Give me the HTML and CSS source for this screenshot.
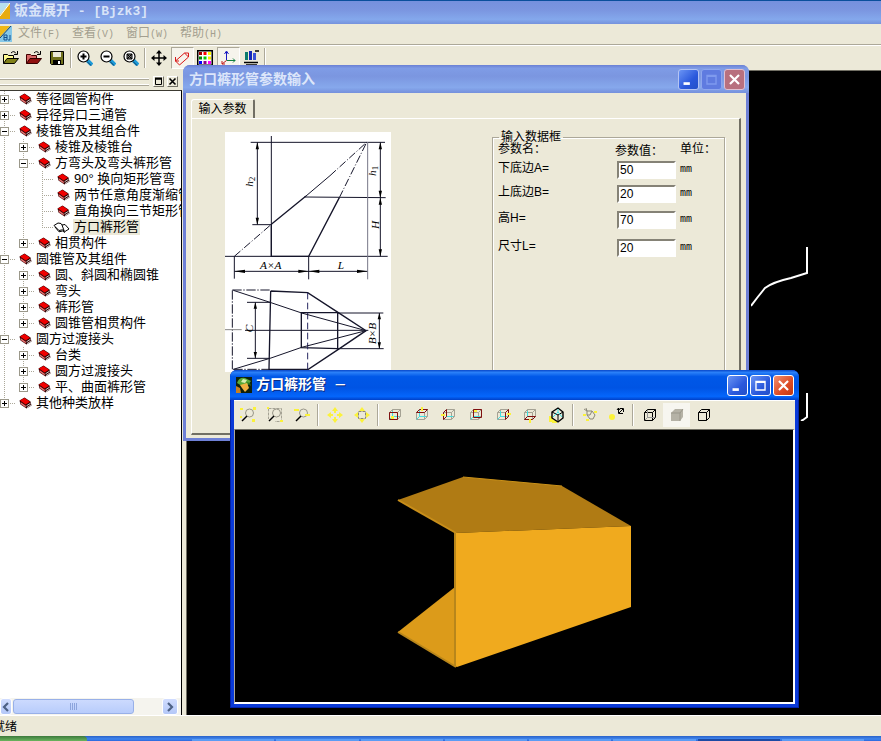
FILE: index.html
```html
<!DOCTYPE html>
<html lang="zh-CN">
<head>
    <meta charset="UTF-8">
    <meta name="viewport" content="width=device-width, initial-scale=1.0">
    <title>钣金展开 - [Bjzk3]</title>
    <link rel="stylesheet" href="styles.css">
</head>
<body>
    <svg class="symbols" aria-hidden="true">
        <symbol id="book" viewBox="0 0 13 12">
            <path d="M0.5 3.5L5.5 0.5L11.5 4.5L12.5 8.5L7.5 11.5L1.5 7.5Z" fill="#300"/>
            <path d="M1 3.6L5.5 1L11 4.8L6.6 7.4Z" fill="#f00000"/>
            <path d="M1.5 5L6.8 8.8V10.6L2 7.2Z" fill="#e87070"/>
            <path d="M7.5 8.8L11.6 6.2M8 10.6L12 8" stroke="#ccc" fill="none"/>
        </symbol>
        <symbol id="open-book" viewBox="0 0 17 12">
            <path d="M1 4.5L5 2L8 2.5L9 4L12 3.5L16 8L12 10.5L9.5 8.8L6 9.5Z" fill="#fff" stroke="#000"/>
            <path d="M9 4L11 9.5M2 6L6 10.8L9.5 10L12 11.5" stroke="#000" fill="none"/>
        </symbol>
        <symbol id="lens" viewBox="0 0 16 16">
            <path d="M10.5 10.5L15 15" stroke="#1c9ad8" stroke-width="4"/>
            <path d="M10 11.5L14 15.5" stroke="#0a3a60"/>
            <circle cx="6.5" cy="6.5" r="5.5" fill="#fff" stroke="#000" stroke-width="1.2"/>
        </symbol>
        <symbol id="cube" viewBox="0 0 16 16">
            <path d="M5.5 2.5H13.5V9.5H5.5ZM2.5 5.5L5.5 2.5M10.5 5.5L13.5 2.5M10.5 12.5L13.5 9.5M2.5 5.5H10.5V12.5H2.5Z" fill="none" stroke="#a5a294"/>
            <path d="M5.5 4V9.5H12M5.5 9.5L2.5 12.5" fill="none" stroke="#3fdfe3"/>
        </symbol>
    </svg>

    <header class="titlebar">
        <svg class="app-icon" viewBox="0 0 10 16"><path d="M0 0H10V16H0Z" fill="#e8ac10"/><path d="M0 0H10L0 12Z" fill="#b8e0ee"/><path d="M0 13L10 0" stroke="#fff"/></svg>
        <h1>钣金展开<span class="latin"> - [Bjzk3]</span></h1>
    </header>

    <nav class="menubar">
        <svg class="doc-icon" viewBox="0 0 12 16"><path d="M0 0H12V16H0Z" fill="#86c8e8"/><path d="M0 0H10L0 11Z" fill="#f0b818"/><path d="M0 12L11 0" stroke="#246"/><path d="M4 9V14H7V9ZM4 11.500H7M10 9V14H8" fill="none" stroke="#124e8c"/></svg>
        <a href="#">文件<span>(F)</span></a>
        <a href="#">查看<span>(V)</span></a>
        <a href="#">窗口<span>(W)</span></a>
        <a href="#">帮助<span>(H)</span></a>
    </nav>

    <div class="toolbar">
        <button aria-label="打开"><svg viewBox="0 0 16 16"><path d="M0.500 13.500V4.500H4.500L5.500 5.500H10.500V8" fill="#fffa90" stroke="#000"/><path d="M0.500 13.500L4 8.500H15.500L11.500 13.500Z" fill="#808018" stroke="#000"/><path d="M8 3Q11 0 13 3.500M14.500 1V4.500H11" fill="none" stroke="#000"/></svg></button>
        <button aria-label="导入"><svg viewBox="0 0 16 16"><path d="M0.500 13.500V4.500H4.500L5.500 5.500H10.500V8" fill="#d86868" stroke="#400"/><path d="M0.500 13.500L4 8.500H15.500L11.500 13.500Z" fill="#901010" stroke="#300"/><path d="M8 3Q11 0 13 3.500M14.500 1V4.500H11" fill="none" stroke="#000"/></svg></button>
        <button aria-label="保存"><svg viewBox="0 0 16 16"><path d="M1.500 1.500H14.500V14.500H2.500L1.500 13.500Z" fill="#70701c" stroke="#000"/><path d="M4 2H12V7H4Z" fill="#ece9d8"/><path d="M4 10H12V14H4Z" fill="#000"/><path d="M9 11H11V14H9Z" fill="#fff"/></svg></button>
        <span class="sep"></span>
        <button aria-label="放大"><svg viewBox="0 0 16 16"><use href="#lens"/><path d="M3.500 6.500H9.500M6.500 3.500V9.500" stroke="#000" stroke-width="2"/></svg></button>
        <button aria-label="缩小"><svg viewBox="0 0 16 16"><use href="#lens"/><path d="M3.500 6.500H9.500" stroke="#000" stroke-width="2"/></svg></button>
        <button aria-label="全部显示"><svg viewBox="0 0 16 16"><use href="#lens"/><path d="M4 4H9V9H4ZM4 4L9 9M9 4L4 9" stroke="#000" fill="#777"/></svg></button>
        <span class="sep"></span>
        <button aria-label="平移"><svg viewBox="0 0 16 16"><path d="M8 2V14M2 8H14" stroke="#000" stroke-width="1.500"/><path d="M8 0L11 3.500H5ZM8 16L11 12.500H5ZM0 8L3.500 5V11ZM16 8L12.500 5V11Z"/></svg></button>
        <button class="pressed" aria-label="测量"><svg viewBox="0 0 16 16"><path d="M1.500 11L10.500 3L14.500 7L5.500 15ZM1.500 7V11H5M10.500 3H14.500V7" fill="none" stroke="#d81818"/></svg></button>
        <button aria-label="颜色"><svg viewBox="0 0 16 16"><path d="M0 0H16V16H0Z"/><path d="M1.500 1.500H14.500V14.500H1.500Z" fill="#fff"/><path d="M2 2H5V5H2Z" fill="#a00000"/><path d="M6.500 2H9.500V5H6.500Z" fill="#f00"/><path d="M11 2H14V5H11Z" fill="#ff0"/><path d="M2 6.500H5V9.500H2Z" fill="#008000"/><path d="M6.500 6.500H9.500V9.500H6.500Z" fill="#0c0"/><path d="M11 6.500H14V9.500H11Z" fill="#f8e800"/><path d="M2 11H5V14H2Z" fill="#00f"/><path d="M6.500 11H9.500V14H6.500Z" fill="#808"/><path d="M11 11H14V14H11Z" fill="#f0f"/></svg></button>
        <button class="pressed" aria-label="坐标轴"><svg viewBox="0 0 16 16"><path d="M6.500 10V2M4.500 4L6.500 1L8.500 4" fill="none" stroke="#1818c0"/><path d="M6.500 10.500H15M13 8.500L15 10.500L13 12.500" fill="none" stroke="#108040"/><path d="M6.500 10.500L2 14M2 11V14H5" fill="none" stroke="#c01818"/></svg></button>
        <button aria-label="排样"><svg viewBox="0 0 16 16"><path d="M2 2H5V10H2Z" fill="#0a7a6a"/><path d="M6 1H9V10H6Z" fill="#1428b8"/><path d="M10 3H13V10H10Z" fill="#3850d8"/><path d="M12 1H16M1 12.500H15M3 15H14" stroke="#000" stroke-width="1.500"/></svg></button>
        <span class="sep"></span>
    </div>

    <main class="workspace">
        <aside class="sidebar">
            <div class="dock-head">
                <span class="grip"></span>
                <button aria-label="停靠"><svg viewBox="0 0 9 9"><path d="M1.500 2H7.500V7.500H1.500Z" fill="none" stroke="#000"/><path d="M1 1.500H8" stroke="#000" stroke-width="2"/></svg></button>
                <button aria-label="关闭面板"><svg viewBox="0 0 9 9"><path d="M1.500 1.500L7.500 7.500M7.500 1.500L1.500 7.500" stroke="#000" stroke-width="1.600"/></svg></button>
            </div>
            <ul class="tree">
                <li><div class="node"><button class="toggle" aria-label="展开"></button><svg><use href="#book"/></svg><span>等径圆管构件</span></div></li>
                <li><div class="node"><button class="toggle" aria-label="展开"></button><svg><use href="#book"/></svg><span>异径异口三通管</span></div></li>
                <li>
                    <div class="node"><button class="toggle open" aria-label="折叠"></button><svg><use href="#book"/></svg><span>棱锥管及其组合件</span></div>
                    <ul>
                        <li><div class="node"><button class="toggle" aria-label="展开"></button><svg><use href="#book"/></svg><span>棱锥及棱锥台</span></div></li>
                        <li>
                            <div class="node"><button class="toggle open" aria-label="折叠"></button><svg><use href="#book"/></svg><span>方弯头及弯头裤形管</span></div>
                            <ul>
                                <li><div class="node leaf"><svg><use href="#book"/></svg><span>90° 换向矩形管弯</span></div></li>
                                <li><div class="node leaf"><svg><use href="#book"/></svg><span>两节任意角度渐缩管</span></div></li>
                                <li><div class="node leaf"><svg><use href="#book"/></svg><span>直角换向三节矩形管</span></div></li>
                                <li><div class="node leaf current"><svg><use href="#open-book"/></svg><span>方口裤形管</span></div></li>
                            </ul>
                        </li>
                        <li><div class="node"><button class="toggle" aria-label="展开"></button><svg><use href="#book"/></svg><span>相贯构件</span></div></li>
                    </ul>
                </li>
                <li>
                    <div class="node"><button class="toggle open" aria-label="折叠"></button><svg><use href="#book"/></svg><span>圆锥管及其组件</span></div>
                    <ul>
                        <li><div class="node"><button class="toggle" aria-label="展开"></button><svg><use href="#book"/></svg><span>圆、斜圆和椭圆锥</span></div></li>
                        <li><div class="node"><button class="toggle" aria-label="展开"></button><svg><use href="#book"/></svg><span>弯头</span></div></li>
                        <li><div class="node"><button class="toggle" aria-label="展开"></button><svg><use href="#book"/></svg><span>裤形管</span></div></li>
                        <li><div class="node"><button class="toggle" aria-label="展开"></button><svg><use href="#book"/></svg><span>圆锥管相贯构件</span></div></li>
                    </ul>
                </li>
                <li>
                    <div class="node"><button class="toggle open" aria-label="折叠"></button><svg><use href="#book"/></svg><span>圆方过渡接头</span></div>
                    <ul>
                        <li><div class="node"><button class="toggle" aria-label="展开"></button><svg><use href="#book"/></svg><span>台类</span></div></li>
                        <li><div class="node"><button class="toggle" aria-label="展开"></button><svg><use href="#book"/></svg><span>圆方过渡接头</span></div></li>
                        <li><div class="node"><button class="toggle" aria-label="展开"></button><svg><use href="#book"/></svg><span>平、曲面裤形管</span></div></li>
                    </ul>
                </li>
                <li><div class="node"><button class="toggle" aria-label="展开"></button><svg><use href="#book"/></svg><span>其他种类放样</span></div></li>
            </ul>
            <div class="scrollbar">
                <button class="arrow first" aria-label="向左滚动"><svg viewBox="0 0 8 10"><path d="M6 1L2 5L6 9" fill="none" stroke="#4d6185" stroke-width="2.200"/></svg></button>
                <div class="track"><div class="thumb"><i></i><i></i><i></i><i></i></div></div>
                <button class="arrow" aria-label="向右滚动"><svg viewBox="0 0 8 10"><path d="M2 1L6 5L2 9" fill="none" stroke="#4d6185" stroke-width="2.200"/></svg></button>
            </div>
        </aside>
        <div class="drawing">
            <svg class="outline" viewBox="0 0 57 174"><path d="M0 59L6 51L14 41Q22 35 40 31L56 26V0M50 174L52 173L56 170V146" fill="none" stroke="#fff" stroke-width="2"/></svg>
        </div>
    </main>

    <footer class="statusbar">就绪</footer>
    <div class="taskbar"><span class="start"></span><i></i><i></i><i></i><i></i><i></i><i></i><i class="active"></i><i></i></div>

    <section class="window params">
        <div class="caption">
            <h2>方口裤形管参数输入</h2>
            <button aria-label="最小化"><svg viewBox="0 0 21 21"><path d="M5 15H12" stroke="#fff" stroke-width="3"/></svg></button>
            <button class="disabled" aria-label="最大化" disabled><svg viewBox="0 0 21 21"><path d="M5.500 6H15.500V15.500H5.500ZM5 7H16" fill="none" stroke="#7f9aee" stroke-width="1.500"/></svg></button>
            <button class="close" aria-label="关闭"><svg viewBox="0 0 21 21"><path d="M5.500 5.500L15.500 15.500M15.500 5.500L5.500 15.500" stroke="#fff" stroke-width="2.400"/></svg></button>
        </div>
        <div class="window-body">
            <button class="tab">输入参数</button>
            <div class="page">
                <svg class="diagram" viewBox="0 0 498 720">
                    <g fill="none" stroke="#15152a" stroke-width="3">
                        <path d="M77 31H480M139 12V373M97 31V278M82 278H139M238 195L482 197M0 373H488M466 31V373M28 373V440M251 373V442M28 418H428"/>
                        <path d="M428 30V442" stroke="#777788"/>
                        <path d="M139 277L243 192M251 373L343 197M139 277V373H251" stroke-width="4"/>
                        <path d="M243 192L315 131"/>
                        <path d="M28 373L139 277M315 131L427 29M343 197L425 31" stroke-dasharray="24 6 3 6"/>
                        <path d="M137 477L248 482L340 542L423 596L340 652L250 712H132L137 477M229 542H338V650L229 647Z" stroke-width="4"/>
                        <path d="M22 475V712M22 474H137M25 712H132" stroke-dasharray="28 5 4 5"/>
                        <path d="M248 482V712" stroke-dasharray="20 10" stroke="#262660"/>
                        <path d="M25 475L138 512L230 543L423 596L230 646L138 678L25 712M91 511V679M66 511H138M66 679H132M338 543H475M338 650H476M463 543V650M60 595H430"/>
                        <path d="M0 593H50" stroke="#888"/>
                    </g>
                    <path d="M97 31L92 52H102ZM97 278L92 257H102ZM466 31L461 52H471ZM466 197L461 176H471ZM466 197L461 218H471ZM466 373L461 352H471ZM28 418L60 413V423ZM251 418L220 413V423ZM251 418L283 413V423ZM428 418L396 413V423ZM91 511L86 530H96ZM91 679L86 660H96ZM463 543L458 562H468ZM463 650L458 631H468Z"/>
                    <g class="dims">
                        <text x="105" y="410">A×A</text>
                        <text x="338" y="410">L</text>
                        <text transform="translate(84 164) rotate(-90)">h<tspan class="sub" dy="5">2</tspan></text>
                        <text transform="translate(454 132) rotate(-90)">h<tspan class="sub" dy="5">1</tspan></text>
                        <text transform="translate(462 291) rotate(-90)">H</text>
                        <text transform="translate(84 601) rotate(-90)">C</text>
                        <text transform="translate(454 637) rotate(-90)">B×B</text>
                    </g>
                </svg>
                <fieldset>
                    <legend>输入数据框</legend>
                    <div class="heads"><span>参数名：</span><span class="value">参数值：</span><span>单位：</span></div>
                    <div class="field"><label for="a">下底边A=</label><input id="a" type="text" value="50"><span>mm</span></div>
                    <div class="field"><label for="b">上底边B=</label><input id="b" type="text" value="20"><span>mm</span></div>
                    <div class="field tall"><label for="h">高H=</label><input id="h" type="text" value="70"><span>mm</span></div>
                    <div class="field tall"><label for="l">尺寸L=</label><input id="l" type="text" value="20"><span>mm</span></div>
                </fieldset>
            </div>
        </div>
    </section>

    <section class="window viewer">
        <div class="caption">
            <svg class="caption-icon" viewBox="0 0 16 16"><path d="M0 0H16V16H0Z" fill="#10200c"/><path d="M1 6Q3 0 9 1L15 4L12 8L6 9Z" fill="#58a838"/><path d="M7 2L11 3L9 6L5 5Z" fill="#d8f0b0"/><path d="M4 8L11 6L13 11L9 15L6 11Z" fill="#f0b040"/><path d="M0 9L4 11L5 16H0Z" fill="#c88020"/><path d="M10 5L14 6L15 9Z" fill="#287018"/></svg>
            <h2>方口裤形管<span class="latin"> －</span></h2>
            <button aria-label="最小化"><svg viewBox="0 0 21 21"><path d="M5 15H12" stroke="#fff" stroke-width="3"/></svg></button>
            <button aria-label="最大化"><svg viewBox="0 0 21 21"><path d="M5.500 6H15.500V15.500H5.500ZM5 7H16" fill="none" stroke="#fff" stroke-width="1.500"/></svg></button>
            <button class="close" aria-label="关闭"><svg viewBox="0 0 21 21"><path d="M5.500 5.500L15.500 15.500M15.500 5.500L5.500 15.500" stroke="#fff" stroke-width="2.400"/></svg></button>
        </div>
        <div class="window-body">
            <div class="view-tools">
                <button aria-label="缩放全部"><svg viewBox="0 0 16 16"><circle cx="9.500" cy="6" r="4" fill="none" stroke="#999688"/><path d="M2 14L7 9" stroke="#000" stroke-width="1.500"/><path d="M0 1H3V3H0ZM13 0H16V3H13ZM12 12H15V15H12ZM0 9H2V11H0Z" fill="#fbf23a"/></svg></button>
                <button aria-label="窗口缩放"><svg viewBox="0 0 16 16"><path d="M1.500 1.500H14.500V14.500H8M1.500 1.500V12" fill="none" stroke="#a5a294" stroke-dasharray="3 1"/><circle cx="9.500" cy="6" r="4" fill="none" stroke="#999688"/><path d="M2 14L7 9" stroke="#000" stroke-width="1.500"/><path d="M0 0H2V2H0ZM13 13H16V15H13Z" fill="#fbf23a"/></svg></button>
                <button aria-label="动态缩放"><svg viewBox="0 0 16 16"><circle cx="9.500" cy="6" r="4" fill="none" stroke="#999688"/><path d="M2 14L7 9" stroke="#000" stroke-width="1.500"/><path d="M0 3H5M11 8H16" stroke="#fbf23a" stroke-width="2"/></svg></button>
                <span class="sep"></span>
                <button aria-label="平移"><svg viewBox="0 0 16 16"><path d="M8 0L11 4H9V6H7V4H5ZM8 16L11 12H9V10H7V12H5ZM0 8L4 5V7H6V9H4V11ZM16 8L12 5V7H10V9H12V11Z" fill="#fbf23a"/></svg></button>
                <button aria-label="居中"><svg viewBox="0 0 16 16"><path d="M4.500 4.500H11.500V11.500H4.500Z" fill="none" stroke="#8a8778" stroke-dasharray="3 1"/><path d="M8 0L11 4H5ZM8 16L11 12H5ZM0 8L4 5V11ZM16 8L12 5V11Z" fill="#fbf23a"/></svg></button>
                <span class="sep"></span>
                <button aria-label="前视图"><svg viewBox="0 0 16 16"><use href="#cube"/><path d="M2.500 5.500H10.500V12.500H2.500Z" fill="none" stroke="#801010"/><path d="M4 9H7V12H4Z" fill="#fbf23a"/></svg></button>
                <button aria-label="俯视图"><svg viewBox="0 0 16 16"><use href="#cube"/><path d="M2.500 5.500L5.500 2.500H13.500L10.500 5.500Z" fill="none" stroke="#801010"/><path d="M7 0H9V4H7Z" fill="#fbf23a"/></svg></button>
                <button aria-label="左视图"><svg viewBox="0 0 16 16"><use href="#cube"/><path d="M2.500 5.500L5.500 2.500V9.500L2.500 12.500Z" fill="none" stroke="#801010"/><path d="M0 7H4V9H0Z" fill="#fbf23a"/></svg></button>
                <button aria-label="后视图"><svg viewBox="0 0 16 16"><use href="#cube"/><path d="M5.500 2.500H13.500V10.500H5.500Z" fill="none" stroke="#801010"/><path d="M6 3H9V5H6Z" fill="#fbf23a"/></svg></button>
                <button aria-label="右视图"><svg viewBox="0 0 16 16"><use href="#cube"/><path d="M10.500 5.500L13.500 2.500V9.500L10.500 12.500Z" fill="none" stroke="#801010"/><path d="M12 6H16V8H12Z" fill="#fbf23a"/></svg></button>
                <button aria-label="仰视图"><svg viewBox="0 0 16 16"><use href="#cube"/><path d="M2.500 12.500L5.500 9.500H13.500L10.500 12.500Z" fill="none" stroke="#801010"/><path d="M7 12H9V16H7Z" fill="#fbf23a"/></svg></button>
                <button aria-label="轴测图"><svg viewBox="0 0 16 16"><path d="M0 9H4V15H0ZM3 13H8V16H3Z" fill="#fbf23a"/><path d="M3 5L9 1L14 5V11L9 15L3 11Z" fill="#ece9d8" stroke="#000" stroke-width="1.400"/><path d="M3 5L9 8L14 5M9 8V15" fill="none" stroke="#000"/><path d="M4 10L9 5L13 10M9 5V2" fill="none" stroke="#3fdfe3"/></svg></button>
                <span class="sep"></span>
                <button aria-label="旋转"><svg viewBox="0 0 16 16"><path d="M5 4L10 4L13 8L11 12H8L5 8ZM2 2L5 4L4 1M10 4L8 8H5" fill="none" stroke="#8a8778"/><path d="M1 7H4V9H1ZM12 4H15V6H12ZM4 12H7V14H4Z" fill="#fbf23a"/></svg></button>
                <button aria-label="光源"><svg viewBox="0 0 16 16"><circle cx="3" cy="10" r="3" fill="#fbf23a"/><path d="M9.500 1V6.500H14M10 6L14 2M8 3L9.500 1L11 3M11 1.500H14.500V5" fill="none" stroke="#000"/></svg></button>
                <span class="sep"></span>
                <button aria-label="线框"><svg viewBox="0 0 16 16"><path d="M2.500 5.500H10.500V13.500H2.500ZM2.500 5.500L5.500 2.500H13.500V10.500L10.500 13.500M10.500 5.500L13.500 2.500" fill="none" stroke="#000"/><path d="M5.500 3V10.500H13M5.500 10.500L3 13" fill="none" stroke="#999"/></svg></button>
                <button class="pressed" aria-label="着色"><svg viewBox="0 0 16 16"><path d="M2 6L6 2H14V10L11 14H2Z" fill="#b5b2a6"/><path d="M2 6H11V14M11 6L14 2" fill="none" stroke="#9a978b"/></svg></button>
                <button aria-label="消隐"><svg viewBox="0 0 16 16"><path d="M2.500 5.500H10.500V13.500H2.500ZM2.500 5.500L5.500 2.500H13.500V10.500L10.500 13.500M10.500 5.500L13.500 2.500" fill="none" stroke="#000"/></svg></button>
            </div>
            <div class="scene">
                <svg viewBox="-1 -1 558 272">
                    <path d="M162 69L227 46L326 55L395 95L220 102Z" fill="#b07b14"/>
                    <path d="M162 69L220 102" stroke="#c88e1a" stroke-width="2"/>
                    <path d="M227 46L326 55" stroke="#c99018"/>
                    <path d="M219 156L162 201L220 236Z" fill="#dc9b1a"/>
                    <path d="M162 201L220 236" stroke="#b8861b" stroke-width="2"/>
                    <path d="M220 102L395 95V176L221 236L219 235V102Z" fill="#f0aa1e"/>
                    <path d="M219 102V235" stroke="#b8861b" stroke-width="2"/>
                </svg>
            </div>
        </div>
    </section>
</body>
</html>
```
FILE: styles.css
```css
* {
    margin: 0;
    padding: 0;
    box-sizing: border-box;
}

body {
    position: relative;
    display: flex;
    flex-direction: column;
    height: 100vh;
    overflow: hidden;
    background: #ece9d8;
    color: #000;
    font-family: "Liberation Sans", "Noto Sans CJK SC", sans-serif;
    font-size: 12px;
    line-height: 16px;
}

button {
    border: none;
    background: none;
    font: inherit;
    color: inherit;
}

svg {
    display: block;
    flex: none;
}

.symbols {
    position: absolute;
    width: 0;
    height: 0;
}

/* main window */
.titlebar {
    display: flex;
    align-items: center;
    gap: 4px;
    height: 24px;
    flex: none;
    padding-bottom: 3px;
    border-top: 1px solid #0a4f9c;
    background: linear-gradient(#7590dd, #7b96e0 40%, #84a8ec 80%, #7592dc);
}

.titlebar h1 {
    color: #d8e4f8;
    font-size: 14px;
    line-height: 20px;
    white-space: pre;
}

.latin {
    font-family: "Liberation Mono", "Noto Sans CJK SC", monospace;
    font-size: 13px;
}

.app-icon {
    width: 10px;
    height: 16px;
}

.menubar {
    display: flex;
    align-items: center;
    gap: 12px;
    height: 21px;
    flex: none;
    border-bottom: 1px solid #aca899;
}

.menubar a {
    color: #a39f8f;
    text-decoration: none;
}

.menubar a span {
    font-family: "Liberation Mono", monospace;
    font-size: 10px;
}

.doc-icon {
    width: 12px;
    height: 16px;
    margin-right: -6px;
}

.toolbar {
    display: flex;
    align-items: center;
    height: 25px;
    flex: none;
    border-top: 1px solid #fff;
}

.toolbar button {
    display: grid;
    place-items: center;
    width: 23px;
    height: 22px;
    padding-right: 1px;
}

.toolbar svg,
.view-tools svg {
    width: 16px;
    height: 16px;
}

.toolbar .pressed {
    background: #f6f4ec;
    border: 1px solid;
    border-color: #aca899 #fff #fff #aca899;
}

.sep {
    width: 2px;
    height: 20px;
    margin: 0 2px 0 1px;
    border-left: 1px solid #aca899;
    border-right: 1px solid #fff;
}

.workspace {
    display: flex;
    flex: 1;
    min-height: 0;
}

.drawing {
    flex: 1;
    background: #000;
    border-top: 1px solid #716f64;
    border-left: 1px solid #716f64;
}

.outline {
    width: 57px;
    height: 174px;
    margin: 176px 0 0 564px;
}

/* sidebar */
.sidebar {
    display: flex;
    flex-direction: column;
    width: 186px;
    flex: none;
    padding-right: 4px;
}

.dock-head {
    display: flex;
    align-items: center;
    gap: 3px;
    height: 20px;
    flex: none;
    padding: 3px 4px 0 0;
}

.grip {
    flex: 1;
    height: 7px;
    margin-right: 1px;
    border: solid #fff;
    border-width: 1px 0;
    box-shadow: 0 1px #aca899, inset 0 1px #aca899;
}

.dock-head button {
    display: grid;
    place-items: center;
    width: 11px;
    height: 11px;
    border: 1px solid;
    border-color: #fff #716f64 #716f64 #fff;
}

.dock-head button svg {
    width: 9px;
    height: 9px;
}

.tree {
    flex: 1;
    min-height: 0;
    overflow: hidden;
    background: #fff;
    border-top: 1px solid #3c3a32;
    border-right: 1px solid #000;
    font-size: 13px;
    list-style: none;
}

.tree ul {
    padding-left: 19px;
    list-style: none;
}

.tree li {
    background: repeating-linear-gradient(#aca899 0 1px, transparent 1px 2px) 4px 0 / 1px 100% no-repeat;
}

.tree li:last-child {
    background-size: 1px 8px;
}

.node {
    display: flex;
    align-items: center;
    height: 16px;
    background: repeating-linear-gradient(90deg, #aca899 0 1px, transparent 1px 2px) 4px 8px / 11px 1px no-repeat;
    white-space: nowrap;
}

.node svg {
    width: 13px;
    height: 12px;
    margin: 0 3px 0 10px;
}

.node.leaf svg {
    margin-left: 19px;
}

.node.current svg {
    width: 17px;
    margin-left: 15px;
}

.node span {
    padding: 0 1px;
    line-height: 16px;
}

.current span {
    background: #ece9d8;
}

.toggle {
    width: 9px;
    height: 9px;
    flex: none;
    border: 1px solid #9b988a;
    background:
        linear-gradient(#000, #000) center / 5px 1px no-repeat,
        linear-gradient(#000, #000) center / 1px 5px no-repeat,
        #fff;
}

.toggle.open {
    background: linear-gradient(#000, #000) center / 5px 1px no-repeat, #fff;
}

.scrollbar {
    display: flex;
    height: 17px;
    flex: none;
    padding-right: 3px;
    background: #f5f4ee;
    border-right: 1px solid #000;
}

.arrow {
    display: grid;
    place-items: center;
    width: 16px;
    border: 1px solid #fff;
    border-radius: 3px;
    background: linear-gradient(#d0dcfe, #b4c8f8);
}

.arrow.first {
    width: 12px;
}

.arrow svg {
    width: 8px;
    height: 10px;
}

.track {
    flex: 1;
    padding: 1px 0 1px 1px;
}

.thumb {
    display: flex;
    align-items: center;
    justify-content: center;
    gap: 1px;
    width: 81%;
    height: 15px;
    border: 1px solid #98b0e8;
    border-radius: 3px;
    background: linear-gradient(#ccdafe, #b8ccfb);
}

.thumb i {
    width: 1px;
    height: 7px;
    background: #8ca4dc;
}

.statusbar {
    height: 21px;
    flex: none;
    border-top: 1px solid #fff;
    line-height: 22px;
    text-indent: -7px;
}

.taskbar {
    display: flex;
    height: 5px;
    flex: none;
    padding-right: 16px;
    background: linear-gradient(#2a62c8, #3f86ee 60%, #2a66dc);
}

.start {
    width: 87px;
    margin-right: 104px;
    border-radius: 0 4px 0 0;
    background: linear-gradient(#3c7a3c, #6ab45e);
}

.taskbar i {
    flex: 1;
    margin: 3px 1px 0;
    background: #5a9cf4;
}

.taskbar .active {
    background: #1c4aa4;
}

/* floating windows */
.window {
    position: absolute;
    display: flex;
    flex-direction: column;
    border-radius: 7px 7px 0 0;
}

.params {
    left: 183px;
    top: 65px;
    width: 566px;
    height: 376px;
    padding: 0 3px 3px;
    background: #6e80d6;
}

.viewer {
    left: 230px;
    top: 370px;
    width: 569px;
    height: 338px;
    padding: 0 4px 4px;
    background: #0a3ad8;
    box-shadow: inset 0 0 0 1px #0424a8;
}

.caption {
    display: flex;
    align-items: center;
    gap: 2px;
    height: 28px;
    flex: none;
    margin: 0 -3px;
    padding: 0 4px 0 6px;
    border-radius: 7px 7px 0 0;
    background: linear-gradient(#6a80d4, #7f9ce6 12%, #7b96e0 40%, #86a8ec 80%, #7590dc);
    color: #dce6fa;
}

.viewer .caption {
    height: 30px;
    margin: 0 -4px;
    padding: 0 5px 0 6px;
    background: linear-gradient(#0846c8, #2a80f8 8%, #0058e8 22%, #0054e4 60%, #0466fc 88%, #0040c8);
    color: #fff;
}

.caption-icon {
    width: 16px;
    height: 16px;
}

.caption h2 {
    flex: 1;
    font-size: 14px;
    line-height: 20px;
    white-space: pre;
}

.viewer h2 {
    padding-left: 2px;
    text-shadow: 1px 1px #0a2a80;
}

.caption button {
    width: 21px;
    height: 21px;
    border: 1px solid #fff;
    border-radius: 3px;
    background: linear-gradient(135deg, #6a94f4, #2a58dc 60%, #2450c8);
}

.caption button svg {
    width: 100%;
    height: 100%;
}

.caption .close {
    background: linear-gradient(135deg, #f09070, #dc4a24 60%, #c03810);
}

.params .caption button {
    border-color: #b4c4f4;
}

.params .caption .disabled {
    background: #5f7be0;
    border-color: #8ea6ee;
}

.params .caption .close {
    background: #b8707e;
    border-color: #e0c0d0;
}

.window-body {
    display: flex;
    flex-direction: column;
    flex: 1;
    min-height: 0;
    background: #ece9d8;
}

.params .window-body {
    padding: 6px 5px 3px;
}

.tab {
    align-self: flex-start;
    width: 64px;
    height: 19px;
    border: solid;
    border-width: 1px 2px 0 1px;
    border-color: #fff #716f64 #716f64 #fff;
    border-radius: 3px 2px 0 0;
}

.page {
    display: flex;
    align-items: flex-start;
    justify-content: space-between;
    flex: 1;
    min-height: 0;
    padding: 13px 14px 0 33px;
    border: solid;
    border-width: 1px 2px 2px 1px;
    border-color: #fff #716f64 #716f64 #fff;
}

.diagram {
    width: 166px;
    height: 240px;
    background: #fff;
}

.dims {
    font-family: "Liberation Serif", serif;
    font-size: 34px;
    font-style: italic;
}

.sub {
    font-size: 26px;
    font-style: normal;
}

fieldset {
    width: 233px;
    height: 280px;
    padding: 0 5px;
    border: 1px solid #aca899;
    box-shadow: 1px 1px #fff, inset 1px 1px #fff;
}

legend {
    margin-left: 1px;
    padding: 0 2px;
    height: 10px;
    line-height: 10px;
}

.heads,
.field {
    display: grid;
    grid-template-columns: 119px 63px 1fr;
}

.heads {
    height: 16px;
}

.heads span {
    line-height: 14px;
    white-space: nowrap;
}

.heads .value {
    margin-left: -2px;
    line-height: 18px;
}

.field {
    align-items: center;
    height: 24px;
}

.field.tall {
    height: 28px;
}

.field label {
    padding-bottom: 5px;
}

.field input {
    width: 59px;
    height: 18px;
    padding: 0 1px;
    border: 2px solid;
    border-color: #858276 #fff #fff #858276;
    background: #fff;
    font: 12px "Liberation Sans", sans-serif;
}

.field span {
    font-family: "Liberation Mono", monospace;
    font-size: 10px;
}

/* 3D viewer */
.view-tools {
    display: flex;
    align-items: center;
    height: 29px;
    flex: none;
    border-top: 1px solid #fff;
}

.view-tools button {
    display: grid;
    place-items: center;
    width: 27px;
    height: 24px;
}

.view-tools .sep {
    height: 22px;
    margin: 0 2px;
}

.view-tools .pressed {
    background: #f7f6f0;
}

.scene {
    flex: 1;
    min-height: 0;
    background: #000;
    border: solid;
    border-width: 1px 2px 2px 1px;
    border-color: #716f64 #fff #fff #aca899;
}

.scene svg {
    width: 100%;
    height: 100%;
}
```
